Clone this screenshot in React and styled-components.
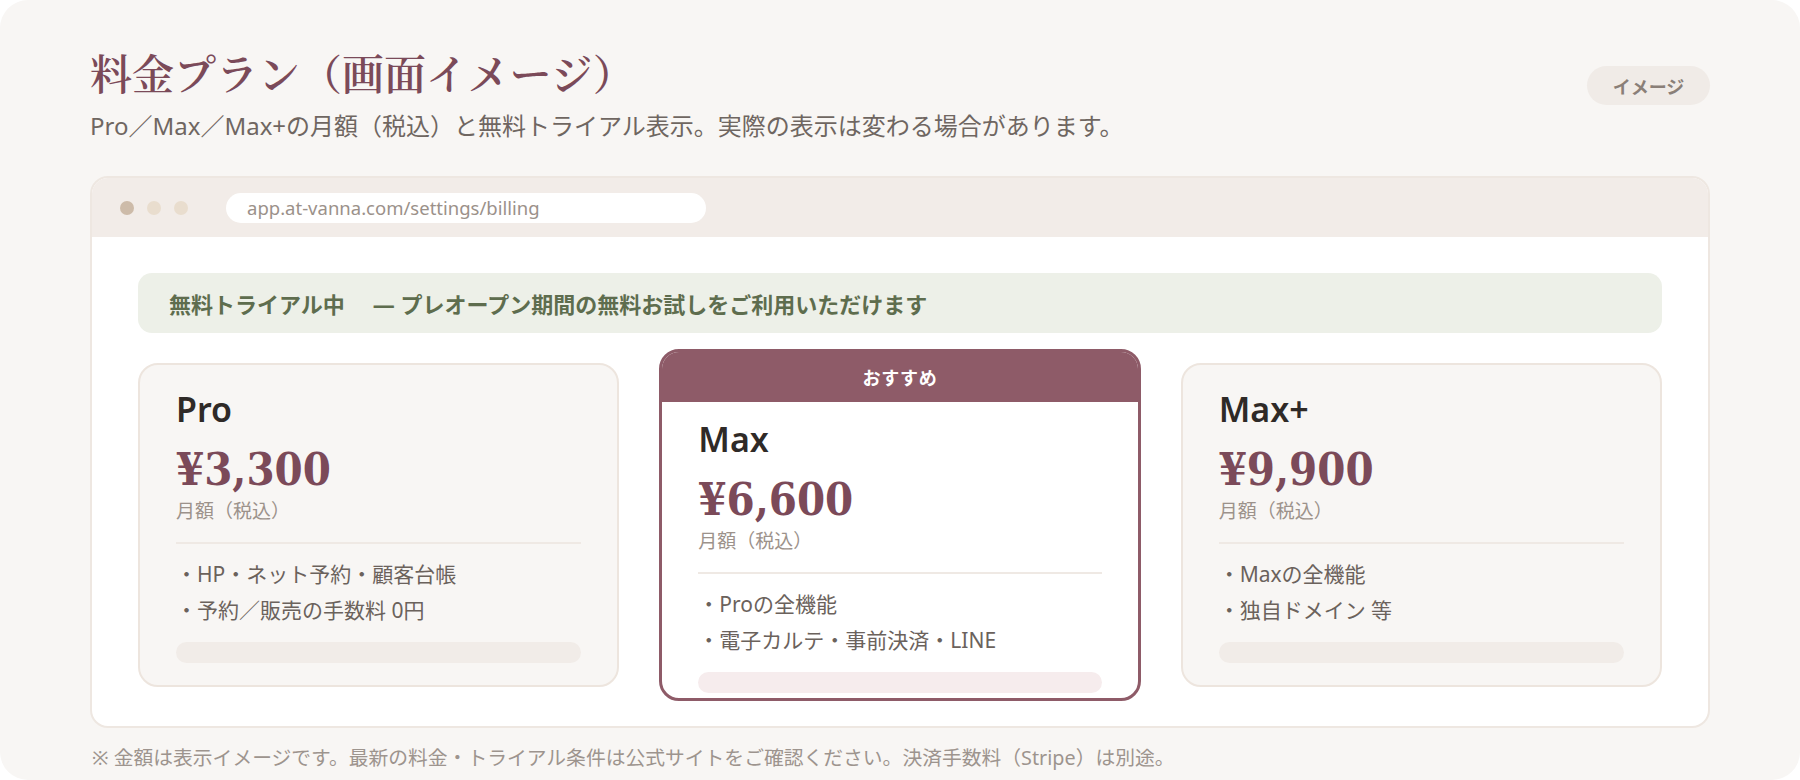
import React from "react"
import styled, { createGlobalStyle } from 'styled-components'

const GlobalStyle = createGlobalStyle`
	html, body {
		margin: 0;
		padding: 0;
		background: #ffffff;
	}
	body {
		font-family: "Noto Sans", "Noto Sans CJK JP", sans-serif;
	}
`

const jp = `"Noto Sans", "Noto Sans CJK JP", sans-serif`

const plans = [
	{
		name: 'Pro',
		price: '¥3,300',
		features: ['・HP・ネット予約・顧客台帳', '・予約／販売の手数料 0円'],
	},
	{
		name: 'Max',
		price: '¥6,600',
		features: ['・Proの全機能', '・電子カルテ・事前決済・LINE'],
		featured: true,
	},
	{
		name: 'Max+',
		price: '¥9,900',
		features: ['・Maxの全機能', '・独自ドメイン 等'],
	},
]

const Page = styled.div`
	box-sizing: border-box;
	width: 1800px;
	height: 780px;
	padding: 47px 90px 0;
	background: #f8f6f4;
	border-radius: 28px;
	font-family: ${jp};
`

const Header = styled.header`
	display: flex;
	justify-content: space-between;
	align-items: flex-start;
`

const Title = styled.h1`
	margin: 0;
	font-family: "Noto Serif CJK JP", "Noto Sans CJK JP", serif;
	font-size: 42px;
	line-height: 50px;
	font-weight: 600;
	color: #7b4a59;
`

const Subtitle = styled.p`
	margin: 13px 0 0;
	font-size: 24px;
	line-height: 32px;
	color: #6f6661;
`

const Badge = styled.span`
	margin-top: 19px;
	display: inline-flex;
	align-items: center;
	justify-content: center;
	width: 123px;
	height: 39px;
	border-radius: 20px;
	background: #f0ebe7;
	color: #8a7f78;
	font-size: 18px;
	font-weight: 700;
`

const Frame = styled.section`
	margin-top: 34px;
	border: 2px solid #eee7e1;
	border-radius: 18px;
	background: #ffffff;
	overflow: hidden;
`

const Toolbar = styled.div`
	display: flex;
	align-items: center;
	height: 59px;
	padding-left: 28px;
	background: #f2ece8;
`

const Dots = styled.div`
	display: flex;
	gap: 13px;
	margin-right: 38px;
`

const Dot = styled.span`
	width: 14px;
	height: 14px;
	border-radius: 50%;
	background: ${p => (p.$first ? '#cdbba9' : '#e9ddce')};
`

const Url = styled.div`
	box-sizing: border-box;
	width: 480px;
	height: 30px;
	padding-left: 21px;
	border-radius: 15px;
	background: #ffffff;
	color: #9b918a;
	font-size: 18.5px;
	line-height: 30px;
`

const Body = styled.div`
	padding: 36px 46px 25px;
`

const Notice = styled.div`
	display: flex;
	align-items: center;
	gap: 28px;
	height: 60px;
	padding-left: 31px;
	border-radius: 14px;
	background: #edf0e8;
	color: #5e6d4e;
	font-size: 22px;
	font-weight: 700;
`

const Grid = styled.div`
	display: grid;
	grid-template-columns: repeat(3, 1fr);
	gap: 40px;
	align-items: center;
	margin-top: 16px;
`

const Card = styled.div`
	display: flex;
	flex-direction: column;
	border: ${p => (p.$featured ? '3px solid #8e5b68' : '2px solid #ede5de')};
	border-radius: 20px;
	background: ${p => (p.$featured ? '#ffffff' : '#f8f6f4')};
	overflow: hidden;
`

const Ribbon = styled.div`
	height: 50px;
	display: flex;
	align-items: center;
	justify-content: center;
	background: #8e5b68;
	color: #ffffff;
	font-size: 18px;
	font-weight: 700;
	letter-spacing: 0.04em;
`

const CardBody = styled.div`
	padding: ${p => (p.$featured ? '17px 36px 5px' : '24px 36px 22px')};
`

const PlanName = styled.h2`
	margin: 0;
	font-size: 34px;
	line-height: 40px;
	font-weight: 600;
	color: #2f2a27;
`

const Price = styled.div`
	margin-top: 16px;
	font-family: "DejaVu Serif Condensed", "DejaVu Serif", serif;
	font-size: 45px;
	line-height: 50px;
	font-weight: 700;
	color: #7b4a59;
`

const PriceNote = styled.div`
	margin-top: 3px;
	font-size: 19px;
	line-height: 26px;
	color: #9c928b;
`

const Divider = styled.hr`
	margin: 18px 0 12px;
	border: 0;
	height: 2px;
	background: #efe9e4;
`

const Features = styled.ul`
	margin: 0;
	padding: 0;
	list-style: none;
`

const Feature = styled.li`
	font-size: 21px;
	line-height: 36px;
	color: #6b625c;
`

const Bar = styled.div`
	margin-top: 14px;
	height: 21px;
	border-radius: 11px;
	background: ${p => (p.$featured ? '#f6eced' : '#f1ece8')};
`

const Footnote = styled.p`
	margin: 18px 0 0 2px;
	font-size: 19.8px;
	line-height: 24px;
	color: #9d948e;
`

function PlanCard({ plan }) {
	return (
		<Card $featured={plan.featured}>
			{plan.featured && <Ribbon>おすすめ</Ribbon>}
			<CardBody $featured={plan.featured}>
				<PlanName>{plan.name}</PlanName>
				<Price>{plan.price}</Price>
				<PriceNote>月額（税込）</PriceNote>
				<Divider />
				<Features>
					{plan.features.map(f => <Feature key={f}>{f}</Feature>)}
				</Features>
				<Bar $featured={plan.featured} />
			</CardBody>
		</Card>
	)
}

export default function App() {
	return (
		<>
			<GlobalStyle />
			<Page>
				<Header>
					<div>
						<Title>料金プラン（画面イメージ）</Title>
						<Subtitle>Pro／Max／Max+の月額（税込）と無料トライアル表示。実際の表示は変わる場合があります。</Subtitle>
					</div>
					<Badge>イメージ</Badge>
				</Header>
				<Frame>
					<Toolbar>
						<Dots>
							<Dot $first />
							<Dot />
							<Dot />
						</Dots>
						<Url>app.at-vanna.com/settings/billing</Url>
					</Toolbar>
					<Body>
						<Notice>
							<span>無料トライアル中</span>
							<span>— プレオープン期間の無料お試しをご利用いただけます</span>
						</Notice>
						<Grid>
							{plans.map(p => <PlanCard key={p.name} plan={p} />)}
						</Grid>
					</Body>
				</Frame>
				<Footnote>※ 金額は表示イメージです。最新の料金・トライアル条件は公式サイトをご確認ください。決済手数料（Stripe）は別途。</Footnote>
			</Page>
		</>
	)
}
